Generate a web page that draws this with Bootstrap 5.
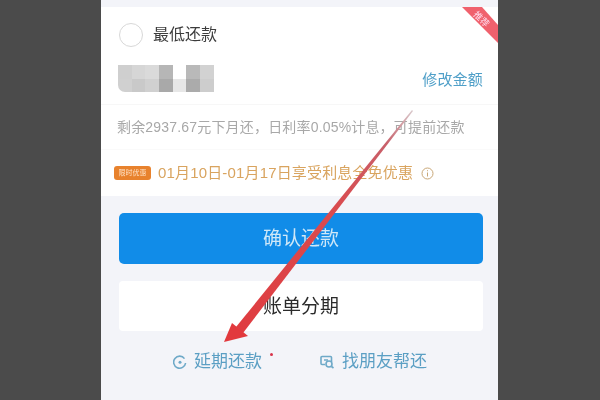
<!DOCTYPE html>
<html lang="zh">
<head>
<meta charset="utf-8">
<title>还款</title>
<link href="https://cdn.jsdelivr.net/npm/bootstrap@5.3.0/dist/css/bootstrap.min.css" rel="stylesheet">
<style>
html,body{height:400px;overflow:hidden}
body{background:#4b4b4b;font-family:"Liberation Sans","Noto Sans CJK SC",sans-serif;margin:0}
.phone{width:397px;height:400px;margin-left:101px;background:#f3f4f9;padding-top:7px;position:relative;overflow:hidden;filter:blur(.4px)}
.paper{height:189px;background:#fff;position:relative}
.row-pick{height:54px;padding:2px 18px 0 18px;gap:10px}
.ring{width:24px;height:24px;border:1.5px solid #d8d8d8;border-radius:50%}
.pick-label{font-size:16px;color:#3c3c3c}
.row-amt{height:44px;padding:4px 15px 0 17px;border-bottom:1px solid #f7f7f7}
.mosaic{display:grid;grid-template-columns:repeat(7,13.7px);grid-template-rows:13.5px 13.5px;border-bottom-left-radius:7px;overflow:hidden}
.c1{background:#cfcfcf}.c2{background:#d6d6d6}.c3{background:#dadada}.c4{background:#b6b6b6}.c5{background:#fff}.c6{background:#b9b9b9}.c7{background:#d2d2d2}
.d1{background:#d0d0d0}.d2{background:#c9c9c9}.d3{background:#d0d0d0}.d4{background:#a9a9a9}.d5{background:#e7e7e7}.d6{background:#ababab}.d7{background:#cdcdcd}
.edit-link{font-size:15px;line-height:22px;color:#4f9fc8;letter-spacing:.2px}
.row-note{height:45px;padding-left:16px;font-size:14px;color:#a8a8a8;border-bottom:1px solid #fafafa;white-space:nowrap;letter-spacing:.18px}
.row-promo{height:46px;padding-left:13px;gap:7px;white-space:nowrap}
.tag-time{width:37px;height:14px;background:#e8822d;border-radius:3px;font-size:7px;line-height:14px;color:#ffe3c8;text-align:center}
.promo-txt{font-size:15px;color:#d9a45f;letter-spacing:.16px}
.info-dot{width:13px;height:13px;margin-left:1px}
.ribbon{position:absolute;top:0;right:0;width:36px;height:36px}
.ribbon-txt{position:absolute;top:7px;right:2px;width:30px;text-align:center;font-size:9px;line-height:11px;color:#fde;transform:rotate(45deg)}
.stack{padding:17px 15px 0 18px}
.act{height:51px;border:0;border-radius:5px;font-size:19px;width:100%;padding:1px 0 0;display:block}
.act-main{background:#118ce8;color:#cfe8f8}
.act-alt{background:#fff;color:#2b2b2b;margin-top:17px;height:50px;border-radius:4px;padding-top:3px}
.links{margin-top:17px;padding-left:72px;gap:58px;white-space:nowrap;position:relative;height:28px}
.lnk{font-size:17px;color:#5b9fc4;gap:7px}
.lnk svg{flex:none}
.red-dot{position:absolute;width:3px;height:3px;background:#d8334a;border-radius:50%;left:169px;top:5px}
.arrow{position:absolute;left:0;top:0;width:397px;height:400px;pointer-events:none}
</style>
</head>
<body>
<div class="phone">
  <div class="paper">
    <div class="ribbon">
      <svg width="36" height="36" viewBox="0 0 36 36"><polygon points="0,0 20,0 36,18 36,36" fill="#f0616d"/></svg>
      <span class="ribbon-txt">推荐</span>
    </div>
    <div class="row-pick d-flex align-items-center">
      <span class="ring"></span><span class="pick-label">最低还款</span>
    </div>
    <div class="row-amt d-flex align-items-start justify-content-between">
      <div class="mosaic">
        <i class="c1"></i><i class="c2"></i><i class="c3"></i><i class="c4"></i><i class="c5"></i><i class="c6"></i><i class="c7"></i>
        <i class="d1"></i><i class="d2"></i><i class="d3"></i><i class="d4"></i><i class="d5"></i><i class="d6"></i><i class="d7"></i>
      </div>
      <span class="edit-link mt-1">修改金额</span>
    </div>
    <div class="row-note d-flex align-items-center">剩余2937.67元下月还，日利率0.05%计息，可提前还款</div>
    <div class="row-promo d-flex align-items-center">
      <span class="tag-time">限时优惠</span>
      <span class="promo-txt">01月10日-01月17日享受利息全免优惠</span>
      <svg class="info-dot" viewBox="0 0 13 13" fill="none" stroke="#c9a777" stroke-width="1"><circle cx="6.5" cy="6.5" r="5.5"/><path d="M6.5 5.5v4M6.5 3.2v1"/></svg>
    </div>
  </div>
  <div class="stack">
    <button type="button" class="btn act act-main">确认还款</button>
    <button type="button" class="btn act act-alt">账单分期</button>
  </div>
  <div class="links d-flex align-items-center">
    <span class="lnk d-flex align-items-center">
      <svg width="14" height="14" viewBox="0 0 14 14" fill="none" stroke="#6ea9c8" stroke-width="1.6"><path d="M11.5 3.6A6 6 0 1 0 12.6 8"/><circle cx="7" cy="7.2" r="1.5" fill="#6ea9c8" stroke="none"/></svg>
      延期还款
    </span>
    <i class="red-dot"></i>
    <span class="lnk d-flex align-items-center">
      <svg width="15" height="14" viewBox="0 0 15 14" fill="none" stroke="#6ea9c8" stroke-width="1.6"><path d="M2 1.5h8.5a1 1 0 0 1 1 1V7M2 1.5a1 1 0 0 0-1 1v6a1 1 0 0 0 1 1h3"/><circle cx="9" cy="9" r="3"/><path d="M11.5 11.5l2 1.5M4 5h4"/></svg>
      找朋友帮还
    </span>
  </div>
  <svg class="arrow" viewBox="0 0 397 400">
    <defs><linearGradient id="shaft" x1="311" y1="110" x2="123" y2="342" gradientUnits="userSpaceOnUse"><stop offset="0" stop-color="#d9c9cc"/><stop offset=".14" stop-color="#c8606a"/><stop offset=".4" stop-color="#d94c50"/><stop offset="1" stop-color="#e03a3e"/></linearGradient></defs>
    <polygon points="311,110 312,111 142,333 135,327" fill="url(#shaft)"/>
    <polygon points="123,342 131,323 147,336" fill="#e2393d"/>
  </svg>
</div>
<script src="https://cdn.jsdelivr.net/npm/bootstrap@5.3.0/dist/js/bootstrap.bundle.min.js"></script>
</body>
</html>
